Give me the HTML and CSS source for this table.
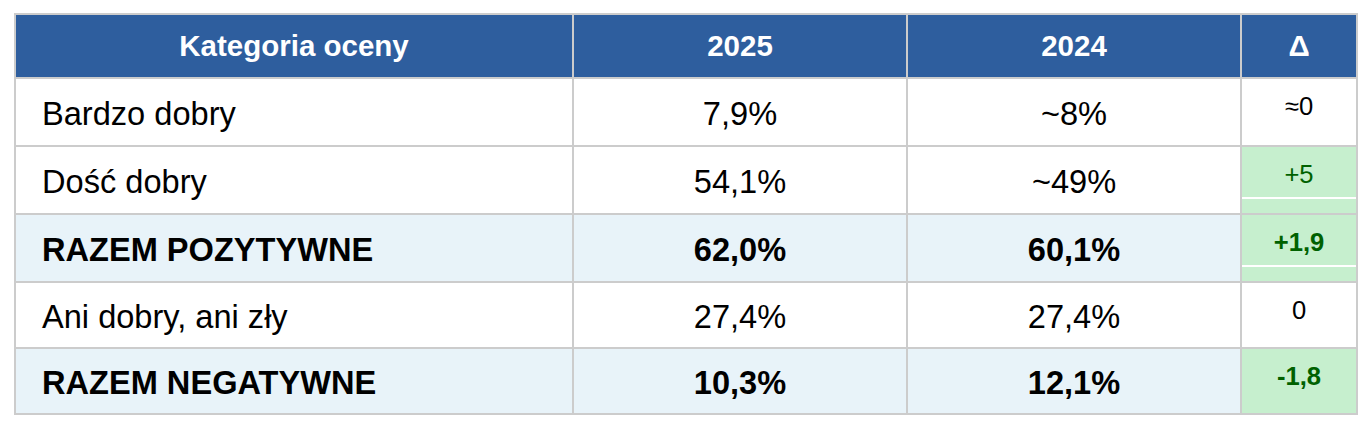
FILE: index.html
```html
<!DOCTYPE html>
<html lang="pl">
<head>
<meta charset="utf-8">
<title>Kategoria oceny</title>
<link rel="stylesheet" href="styles.css">
</head>
<body>
<div class="page">
<table class="grades">
  <colgroup>
    <col class="c-cat">
    <col class="c-year">
    <col class="c-year">
    <col class="c-delta">
  </colgroup>
  <thead>
    <tr class="head">
      <th>Kategoria oceny</th>
      <th>2025</th>
      <th>2024</th>
      <th>Δ</th>
    </tr>
  </thead>
  <tbody>
    <tr class="r1">
      <td class="cat">Bardzo dobry</td>
      <td class="val">7,9%</td>
      <td class="val">~8%</td>
      <td class="delta"><div class="dv">≈0</div></td>
    </tr>
    <tr class="r2">
      <td class="cat">Dość dobry</td>
      <td class="val">54,1%</td>
      <td class="val">~49%</td>
      <td class="delta good"><div class="dv">+5</div></td>
    </tr>
    <tr class="r3 total">
      <td class="cat">RAZEM POZYTYWNE</td>
      <td class="val">62,0%</td>
      <td class="val">60,1%</td>
      <td class="delta good"><div class="dv">+1,9</div></td>
    </tr>
    <tr class="r4">
      <td class="cat">Ani dobry, ani zły</td>
      <td class="val">27,4%</td>
      <td class="val">27,4%</td>
      <td class="delta"><div class="dv">0</div></td>
    </tr>
    <tr class="r5 total">
      <td class="cat">RAZEM NEGATYWNE</td>
      <td class="val">10,3%</td>
      <td class="val">12,1%</td>
      <td class="delta good"><div class="dv noline">-1,8</div></td>
    </tr>
  </tbody>
</table>
</div>
</body>
</html>
```

FILE: styles.css
```css
html, body {
  margin: 0;
  padding: 0;
  background: #ffffff;
}

.page {
  padding: 13px 0 0 14px;
  font-family: "Liberation Sans", Arial, Helvetica, sans-serif;
  color: #000000;
}

.grades {
  border-collapse: collapse;
  table-layout: fixed;
  width: 1344px;
  font-size: 32.6px;
}

.c-cat { width: 558px; }
.c-year { width: 334px; }
.c-delta { width: 116px; }

.grades th,
.grades td {
  border: 2px solid #cccccc;
  padding: 0;
  vertical-align: middle;
}

.head {
  height: 64px;
}

.head th {
  background: #2e5e9e;
  color: #ffffff;
  font-weight: bold;
  font-size: 29.5px;
  text-align: center;
}

.r1, .r2, .r3 { height: 68px; }
.r4, .r5 { height: 66px; }

.grades td.cat {
  padding: 3px 0 0 26px;
  text-align: left;
}

.grades td.val {
  padding-top: 3px;
  text-align: center;
}

.total td {
  background: #e8f3f9;
  font-weight: bold;
}

.grades td.delta {
  vertical-align: top;
  text-align: center;
  font-size: 25.6px;
  padding-top: 12px;
}

.grades td.good {
  background: #c6efce;
  color: #006100;
}

.dv {
  line-height: 30px;
  padding-bottom: 8px;
  border-bottom: 2px solid #ffffff;
}

.dv.noline {
  border-bottom-color: transparent;
}
```
